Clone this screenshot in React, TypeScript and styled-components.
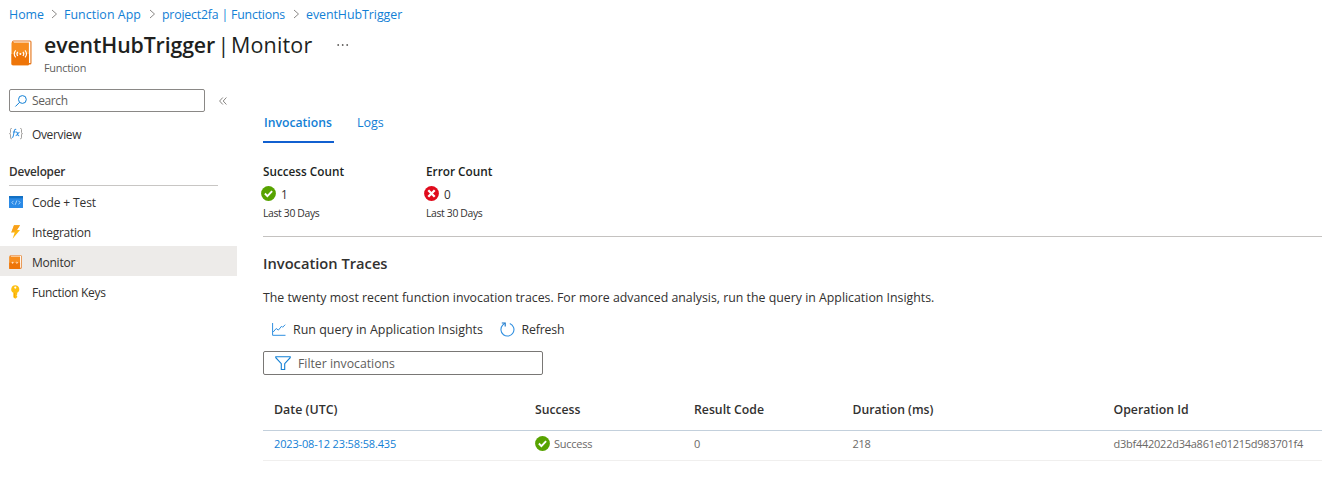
import React from "react";
import styled, { createGlobalStyle } from "styled-components";

const GlobalStyle = createGlobalStyle`
  * { box-sizing: border-box; }
  body { margin: 0; background: #fff; color: #323130; font-family: "Open Sans", "Noto Sans", sans-serif; overflow: hidden; }
  svg { display: block; flex: none; overflow: visible; }
`;

const Text = styled.span<{ $size: number; $weight?: number; $spacing?: number; $color?: string }>`
  font-size: ${(p) => p.$size}px;
  font-weight: ${(p) => p.$weight ?? 400};
  letter-spacing: ${(p) => p.$spacing ?? 0}px;
  color: ${(p) => p.$color ?? "inherit"};
  white-space: pre;
`;

const Page = styled.div`
  height: 483px;
  display: flex;
  flex-direction: column;
`;

const Breadcrumb = styled.nav`
  height: 28px;
  display: flex;
  align-items: center;
  padding-left: 9px;
`;

const Crumb = styled(Text)`
  color: #1280d5;
  line-height: 29px;
`;

const CrumbSlot = styled.span<{ $width: number }>`
  width: ${(p) => p.$width}px;
  display: flex;
`;

const SeparatorSlot = styled.span`
  width: 20px;
  display: flex;
  padding-left: 7px;
`;

const Header = styled.header`
  height: 61px;
  display: flex;
  padding-left: 11px;
`;

const HeaderIcon = styled.div`
  width: 33px;
  padding-top: 12px;
`;

const TitleBlock = styled.div`
  display: flex;
  flex-direction: column;
`;

const TitleLine = styled.h1`
  margin: 2px 0 0;
  height: 30px;
  line-height: 30px;
  display: flex;
  color: #201f1e;
`;

const TitlePart = styled.span<{ $width: number }>`
  width: ${(p) => p.$width}px;
  display: flex;
`;

const Subtitle = styled(Text)`
  line-height: 16px;
  color: #605e5c;
`;

const MoreSlot = styled.div`
  padding-top: 16px;
  margin-left: 24px;
`;

const Body = styled.div`
  flex: 1;
  display: flex;
`;

const Sidebar = styled.aside`
  width: 237px;
  flex: none;
`;

const SearchRow = styled.div`
  display: flex;
  align-items: center;
  height: 23px;
  padding-left: 9px;
  gap: 14px;
`;

const SearchBox = styled.div`
  width: 196px;
  height: 23px;
  border: 1px solid #8a8886;
  border-radius: 2px;
  display: flex;
  align-items: center;
  padding-left: 5px;
  gap: 5px;
  line-height: 18px;
  color: #605e5c;
`;

const MenuItem = styled.div<{ $selected?: boolean }>`
  height: 30px;
  padding-left: 9px;
  display: flex;
  align-items: center;
  background: ${(p) => (p.$selected ? "#edebe9" : "transparent")};
`;

const SectionItem = styled(MenuItem)`
  padding-top: 2px;
`;

const MenuIcon = styled.span`
  width: 23px;
  display: flex;
`;

const OverviewSlot = styled.div`
  padding-top: 7px;
`;

const SectionTitle = styled.div`
  margin: 9px 19px 0 9px;
  height: 28px;
  line-height: 24px;
  border-bottom: 1px solid #c8c6c4;
  color: #323130;
`;

const Main = styled.main`
  flex: 1;
  padding-left: 26px;
  min-width: 0;
`;

const Tabs = styled.div`
  display: flex;
  gap: 22px;
  padding-top: 18px;
`;

const Tab = styled.div<{ $active?: boolean }>`
  height: 36px;
  padding: 0 1px;
  width: ${(p) => (p.$active ? "71px" : "auto")};
  line-height: 29px;
  border-bottom: ${(p) => (p.$active ? "2px solid #1160d0" : "none")};
  color: #1280d5;
`;

const Counts = styled.div`
  display: flex;
  padding-top: 19px;
  height: 94px;
  border-bottom: 1px solid #c4c2c0;
`;

const Count = styled.div`
  width: 163px;
  display: flex;
  flex-direction: column;
`;

const CountLabel = styled(Text)`
  line-height: 18px;
  height: 18px;
  color: #201f1e;
`;

const CountValue = styled.div`
  display: flex;
  align-items: center;
  gap: 5px;
  height: 27px;
  margin-left: -2px;
`;

const CountPeriod = styled(Text)`
  line-height: 13px;
`;

const Heading = styled.h2`
  margin: 14px 0 0;
  height: 25px;
  line-height: 24px;
  display: flex;
`;

const Description = styled.p`
  margin: 11px 0 0;
  height: 22px;
  line-height: 22px;
  display: flex;
`;

const Commands = styled.div`
  height: 30px;
  margin-top: 5px;
  padding-left: 9px;
  display: flex;
  align-items: center;
`;

const Command = styled.div<{ $width: number; $gap: number }>`
  width: ${(p) => p.$width}px;
  display: flex;
  align-items: center;
  gap: ${(p) => p.$gap}px;
`;

const FilterBox = styled.div`
  margin-top: 7px;
  width: 280px;
  height: 24px;
  border: 1px solid #797775;
  border-radius: 2px;
  padding-left: 11px;
  display: flex;
  align-items: center;
  gap: 7px;
  color: #605e5c;
`;

const TableRow = styled.div<{ $head?: boolean }>`
  display: grid;
  grid-template-columns: 261px 159px 158.5px 261px 1fr;
  align-items: center;
  padding-left: 11px;
  height: ${(p) => (p.$head ? 41 : 30)}px;
  padding-bottom: ${(p) => (p.$head ? 1 : 4)}px;
  border-bottom: 1px solid ${(p) => (p.$head ? "#c3d0dc" : "#f0efee")};
  color: ${(p) => (p.$head ? "#323130" : "#6b6967")};
`;

const Table = styled.div`
  margin-top: 15px;
`;

const StatusCell = styled.div`
  display: flex;
  align-items: center;
  gap: 4px;
`;

const Separator = () => (
  <SeparatorSlot>
    <svg width="7" height="10" viewBox="0 0 7 10" fill="none" stroke="#8a8886" strokeWidth="1">
      <path d="M1 1l4.5 4L1 9" />
    </svg>
  </SeparatorSlot>
);

const BookIcon = ({ small }: { small?: boolean }) => (
  <svg width={small ? 13 : 21} height={small ? 14.5 : 26} viewBox="0 0 21 26" preserveAspectRatio="none">
    <rect x="1" y="0.5" width="19.5" height="24" rx="1.5" fill="#e6761a" />
    <path d="M2 1.5h17.4V23H17z" fill="#fff" />
    <path d="M.5 2.5h17.4v21.8c0 .6-.4 1-1 1H2a1.5 1.5 0 01-1.5-1.5z" fill="#f78d1e" />
    <path d="M.5 14h17.4v10.3c0 .6-.4 1-1 1H2a1.5 1.5 0 01-1.5-1.5z" fill="#ee7508" />
    {small ? (
      <path d="M3.600 13.800l3-2.300v4.600zM15 13.800l-3-2.300v4.600zM6 13.500h2v.9H6zM10.600 13.500h2v.9h-2z" fill="#ffe3c8" />
    ) : (
      <>
        <path d="M4.7 10.3c-1.7 2-1.7 5 0 7M6.8 11.8c-1 1.2-1 3 0 4.2M14 10.3c1.7 2 1.7 5 0 7M11.9 11.8c1 1.2 1 3 0 4.2" fill="none" stroke="#fff" strokeWidth="1.15" />
        <circle cx="9.35" cy="13.9" r="1" fill="#fff" />
      </>
    )}
  </svg>
);

const SearchIcon = () => (
  <svg width="12" height="12" viewBox="0 0 12 12" fill="none" stroke="#1280d5" strokeWidth="1">
    <circle cx="7.4" cy="4.5" r="3.9" />
    <path d="M4.6 7.3L.4 11.5" />
  </svg>
);

const CollapseIcon = () => (
  <svg width="8" height="8" viewBox="0 0 8 8" fill="none" stroke="#797775" strokeWidth=".9">
    <path d="M3.8.5L.6 4l3.2 3.5M7.4.5L4.2 4l3.2 3.5" />
  </svg>
);

const FunctionIcon = () => (
  <svg width="14" height="12" viewBox="0 0 14 12" fill="none">
    <path d="M3 .5H2.4c-.6 0-.9.3-.9.9v3c0 .8-.3 1.2-1 1.2.7 0 1 .4 1 1.2v3c0 .6.3.9.9.9H3M11 .5h.6c.6 0 .9.3.9.9v3c0 .8.3 1.2 1 1.2-.7 0-1 .4-1 1.2v3c0 .6-.3.9-.9.9H11" stroke="#a19f9d" strokeWidth="1" />
    <path d="M7.2 1.5c-1.2-.5-1.7.2-1.9 1.4L4.3 8c-.2 1.1-.7 1.5-1.5 1.2M3.9 4h2.8M7 4.2c1-.4 1.3.3 1.6 1.7.3 1.5.7 2.2 1.6 1.7M10.6 4.2C9.3 4 8.3 7.7 6.7 7.6" stroke="#2f8fe0" strokeWidth="1.05" />
  </svg>
);

const CodeIcon = () => (
  <svg width="14" height="12" viewBox="0 0 14 12">
    <rect width="14" height="12" rx=".6" fill="#2b8ae6" />
    <path d="M0 0h14v2.3H0z" fill="#1270c4" />
    <path d="M4.5 4.8L2.9 6.6l1.6 1.8M9.5 4.8l1.6 1.8-1.6 1.8M7.8 4.5L6.2 8.8" fill="none" stroke="#b5dbff" strokeWidth=".9" />
  </svg>
);

const BoltIcon = () => (
  <svg width="14" height="14" viewBox="0 0 14 14">
    <path d="M5 .3h6L7.9 5H11L3.6 13.7 5.7 7.5H2.3z" fill="#fcb813" />
    <path d="M5 .3h6L7.9 5 2.3 7.5z" fill="#f9a01b" />
  </svg>
);

const KeyIcon = () => (
  <svg width="14" height="14" viewBox="0 0 14 14">
    <path d="M6.3.3a4 4 0 00-2 7.5v4.5l2 1.5 1.9-1.5V11l-.8-.8.8-.8V7.8A4 4 0 006.3.3z" fill="#fdbf12" />
    <circle cx="6.3" cy="2.6" r="1.1" fill="#fff" />
    <path d="M5.5 8v4.5" stroke="#f59b00" strokeWidth=".7" />
  </svg>
);

const SuccessIcon = () => (
  <svg width="15" height="15" viewBox="0 0 15 15">
    <circle cx="7.5" cy="7.5" r="7.4" fill="#57a300" />
    <path d="M3.9 7.5l2.5 2.6 4.7-5" fill="none" stroke="#fff" strokeWidth="1.9" />
  </svg>
);

const ErrorIcon = () => (
  <svg width="15" height="15" viewBox="0 0 15 15">
    <circle cx="7.5" cy="7.5" r="7.4" fill="#e00b1c" />
    <path d="M4.3 4.3l6.4 6.4M10.7 4.3l-6.4 6.4" fill="none" stroke="#fff" strokeWidth="2.3" />
  </svg>
);

const ChartIcon = () => (
  <svg width="14" height="13" viewBox="0 0 14 13" fill="none" stroke="#2f8fe0" strokeWidth="1">
    <path d="M.6 0v12.3H13.5" />
    <path d="M1.2 9l3-3.5 2.2 1.6 3.2-3.9 1 1.1 2.6-2.6" />
  </svg>
);

const RefreshIcon = () => (
  <svg width="15" height="15" viewBox="0 0 15 15" fill="none" stroke="#2f8fe0" strokeWidth="1.1">
    <path d="M9.8 1.5A6.5 6.5 0 112.9 2.9L4.7 1.4" />
    <path d="M1.8 1h3.4v3.4" stroke="#1270c4" />
  </svg>
);

const FilterIcon = () => (
  <svg width="16" height="15" viewBox="0 0 16 15" fill="none" stroke="#1280d5" strokeWidth="1.1">
    <path d="M.8.7h14.4v1L9.7 7.6v5.9H6.3V7.6L.8 1.7z" />
  </svg>
);

const menu = [
  { label: "Code + Test", icon: <CodeIcon />, spacing: -0.12 },
  { label: "Integration", icon: <BoltIcon />, spacing: -0.26 },
  { label: "Monitor", icon: <BookIcon small />, spacing: -0.25, selected: true },
  { label: "Function Keys", icon: <KeyIcon />, spacing: -0.3 },
];

export default function App() {
  return (
    <Page>
      <GlobalStyle />
      <Breadcrumb>
        <CrumbSlot $width={35}><Crumb $size={12.4}>Home</Crumb></CrumbSlot>
        <Separator />
        <CrumbSlot $width={78}><Crumb $size={12.4} $spacing={0.05}>Function App</Crumb></CrumbSlot>
        <Separator />
        <CrumbSlot $width={124}><Crumb $size={12.3} $spacing={-0.18}>project2fa | Functions</Crumb></CrumbSlot>
        <Separator />
        <Crumb $size={12.4} $spacing={-0.05}>eventHubTrigger</Crumb>
      </Breadcrumb>
      <Header>
        <HeaderIcon><BookIcon /></HeaderIcon>
        <TitleBlock>
          <TitleLine>
            <TitlePart $width={173.5}><Text $size={21.3} $weight={600} $spacing={-0.12}>eventHubTrigger</Text></TitlePart>
            <TitlePart $width={13.5}><Text $size={21.5}>|</Text></TitlePart>
            <TitlePart $width={82}><Text $size={21.5} $spacing={0.15}>Monitor</Text></TitlePart>
          </TitleLine>
          <Subtitle $size={10.9} $spacing={-0.25}>Function</Subtitle>
        </TitleBlock>
        <MoreSlot>
          <svg width="12" height="2" viewBox="0 0 12 2" fill="#605e5c">
            <circle cx="1.2" cy="1" r=".9" /><circle cx="5.7" cy="1" r=".9" /><circle cx="10.2" cy="1" r=".9" />
          </svg>
        </MoreSlot>
      </Header>
      <Body>
        <Sidebar>
          <SearchRow>
            <SearchBox><SearchIcon /><Text $size={12} $spacing={-0.4}>Search</Text></SearchBox>
            <CollapseIcon />
          </SearchRow>
          <OverviewSlot>
            <MenuItem><MenuIcon><FunctionIcon /></MenuIcon><Text $size={12} $spacing={-0.36}>Overview</Text></MenuItem>
          </OverviewSlot>
          <SectionTitle><Text $size={11.8} $weight={600} $spacing={-0.24}>Developer</Text></SectionTitle>
          {menu.map((m) => (
            <SectionItem key={m.label} $selected={m.selected}>
              <MenuIcon>{m.icon}</MenuIcon>
              <Text $size={12} $spacing={m.spacing}>{m.label}</Text>
            </SectionItem>
          ))}
        </Sidebar>
        <Main>
          <Tabs>
            <Tab $active><Text $size={12.2} $weight={600}>Invocations</Text></Tab>
            <Tab><Text $size={12.5}>Logs</Text></Tab>
          </Tabs>
          <Counts>
            <Count>
              <CountLabel $size={11.75} $weight={600}>Success Count</CountLabel>
              <CountValue><SuccessIcon /><Text $size={11.8}>1</Text></CountValue>
              <CountPeriod $size={10.4} $spacing={-0.35}>Last 30 Days</CountPeriod>
            </Count>
            <Count>
              <CountLabel $size={11.8} $weight={600}>Error Count</CountLabel>
              <CountValue><ErrorIcon /><Text $size={11.8}>0</Text></CountValue>
              <CountPeriod $size={10.4} $spacing={-0.35}>Last 30 Days</CountPeriod>
            </Count>
          </Counts>
          <Heading><Text $size={14.7} $weight={600}>Invocation Traces</Text></Heading>
          <Description>
            <Text $size={12.34}>The twenty most recent function invocation traces. For more advanced analysis, run the query in Application Insights.</Text>
          </Description>
          <Commands>
            <Command $width={228} $gap={7}><ChartIcon /><Text $size={12.44}>Run query in Application Insights</Text></Command>
            <Command $width={70} $gap={6.5}><RefreshIcon /><Text $size={12.3} $spacing={-0.15}>Refresh</Text></Command>
          </Commands>
          <FilterBox><FilterIcon /><Text $size={12.26}>Filter invocations</Text></FilterBox>
          <Table>
            <TableRow $head>
              <Text $size={12.4} $weight={600}>Date (UTC)</Text>
              <Text $size={12.2} $weight={600}>Success</Text>
              <Text $size={12.25} $weight={600}>Result Code</Text>
              <Text $size={12.2} $weight={600}>Duration (ms)</Text>
              <Text $size={12.3} $weight={600}>Operation Id</Text>
            </TableRow>
            <TableRow>
              <Text $size={11} $spacing={-0.15} $color="#1280d5">2023-08-12 23:58:58.435</Text>
              <StatusCell><SuccessIcon /><Text $size={11} $spacing={-0.25}>Success</Text></StatusCell>
              <Text $size={11}>0</Text>
              <Text $size={11} $spacing={-0.25}>218</Text>
              <Text $size={11} $spacing={-0.25}>d3bf442022d34a861e01215d983701f4</Text>
            </TableRow>
          </Table>
        </Main>
      </Body>
    </Page>
  );
}
